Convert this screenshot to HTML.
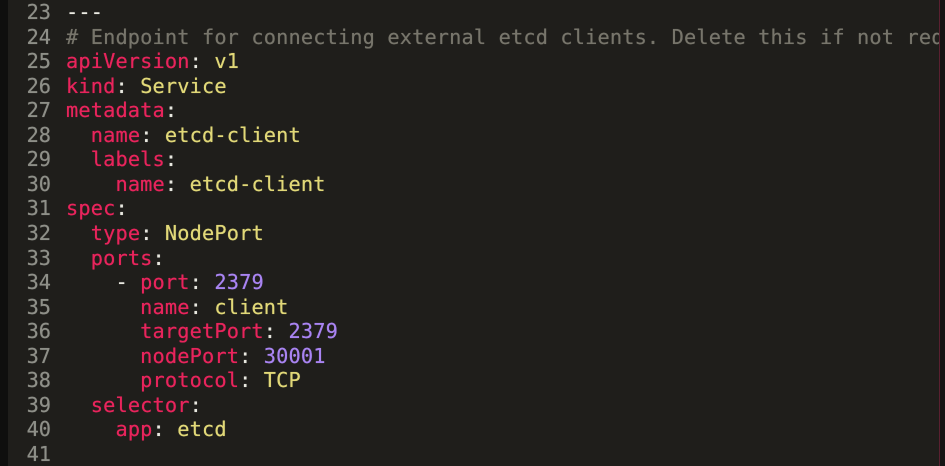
<!DOCTYPE html>
<html><head><meta charset="utf-8"><style>
html,body{margin:0;padding:0;width:945px;height:466px;overflow:hidden;background:#1f1e1b}
#lb{position:absolute;left:0;top:0;width:8px;height:466px;background:#0f0f0e}
#rb{position:absolute;left:939px;top:0;width:6px;height:466px;background:#151514;border-left:1px solid #5a2030}
.l{position:absolute;left:0;height:24px;line-height:24px;font-family:"DejaVu Sans Mono","Liberation Mono",monospace;font-size:20.3px;letter-spacing:0.15px;white-space:pre;color:#e8e8e0;text-shadow:0 0 0.6px currentColor}
.n{display:inline-block;width:51px;text-align:right;color:#8e8f88;margin-right:15px;letter-spacing:0}
.k{color:#e8245c}.s{color:#e1d878}.p{color:#a984f2}.c{color:#77756b}.w{color:#ecece4}
</style></head><body>
<div id="lb"></div>
<div class="l" style="top:0px"><span class="n">23</span><span class="w">---</span></div>
<div class="l" style="top:24.5px"><span class="n">24</span><span class="c"># Endpoint for connecting external etcd clients. Delete this if not req</span></div>
<div class="l" style="top:49px"><span class="n">25</span><span class="k">apiVersion</span>: <span class="s">v1</span></div>
<div class="l" style="top:73.6px"><span class="n">26</span><span class="k">kind</span>: <span class="s">Service</span></div>
<div class="l" style="top:98.2px"><span class="n">27</span><span class="k">metadata</span>:</div>
<div class="l" style="top:122.7px"><span class="n">28</span>  <span class="k">name</span>: <span class="s">etcd-client</span></div>
<div class="l" style="top:147.3px"><span class="n">29</span>  <span class="k">labels</span>:</div>
<div class="l" style="top:171.8px"><span class="n">30</span>    <span class="k">name</span>: <span class="s">etcd-client</span></div>
<div class="l" style="top:196.4px"><span class="n">31</span><span class="k">spec</span>:</div>
<div class="l" style="top:221px"><span class="n">32</span>  <span class="k">type</span>: <span class="s">NodePort</span></div>
<div class="l" style="top:245.5px"><span class="n">33</span>  <span class="k">ports</span>:</div>
<div class="l" style="top:270px"><span class="n">34</span>    - <span class="k">port</span>: <span class="p">2379</span></div>
<div class="l" style="top:294.6px"><span class="n">35</span>      <span class="k">name</span>: <span class="s">client</span></div>
<div class="l" style="top:319.2px"><span class="n">36</span>      <span class="k">targetPort</span>: <span class="p">2379</span></div>
<div class="l" style="top:343.7px"><span class="n">37</span>      <span class="k">nodePort</span>: <span class="p">30001</span></div>
<div class="l" style="top:368.3px"><span class="n">38</span>      <span class="k">protocol</span>: <span class="s">TCP</span></div>
<div class="l" style="top:392.8px"><span class="n">39</span>  <span class="k">selector</span>:</div>
<div class="l" style="top:417.4px"><span class="n">40</span>    <span class="k">app</span>: <span class="s">etcd</span></div>
<div class="l" style="top:442px"><span class="n">41</span></div>
<div id="rb"></div>
</body></html>
